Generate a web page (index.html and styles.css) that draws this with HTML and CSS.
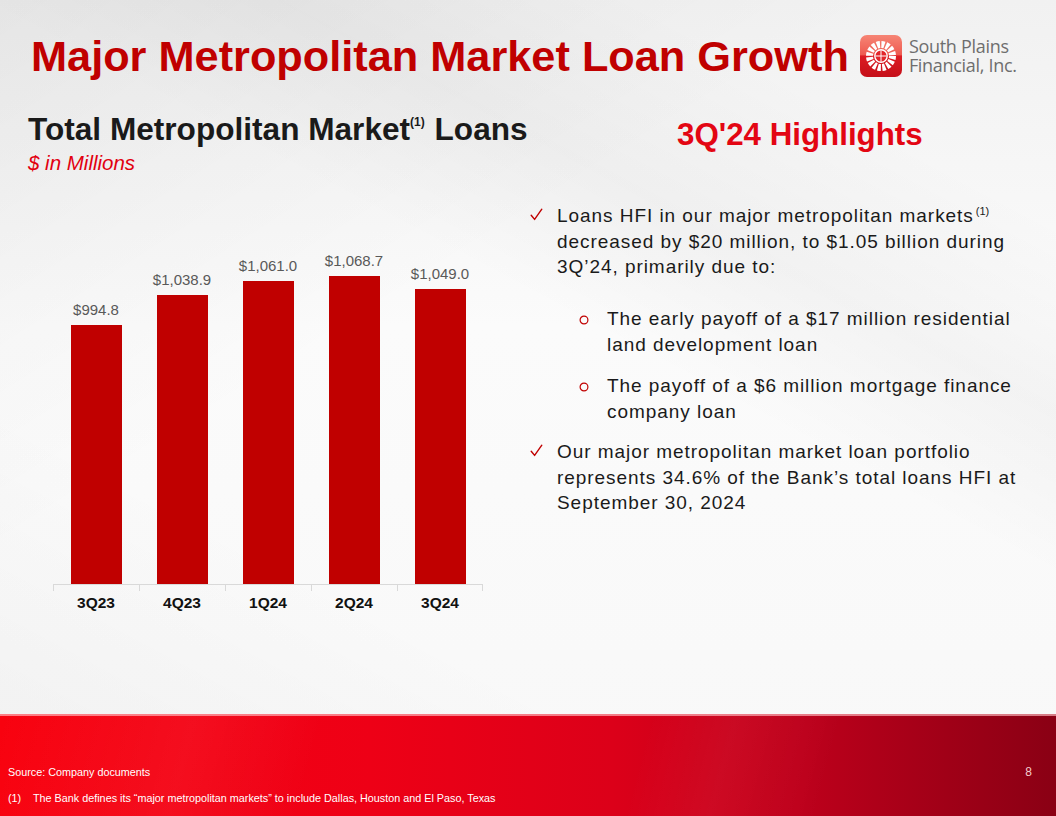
FILE: index.html
```html
<!DOCTYPE html>
<html lang="en">
<head>
<meta charset="utf-8">
<title>Major Metropolitan Market Loan Growth</title>
<link rel="stylesheet" href="styles.css">
</head>
<body>
<div class="slide">
  <header class="top">
    <h1 class="title">Major Metropolitan Market Loan Growth</h1>
    <div class="logo">
      <svg class="logo-mark" viewBox="0 0 42 42" width="42" height="42" aria-hidden="true">
        <defs>
          <linearGradient id="lg" x1="0" y1="0" x2="0" y2="1">
            <stop offset="0" stop-color="#f68575"/>
            <stop offset="0.47" stop-color="#ee5a50"/>
            <stop offset="0.5" stop-color="#dc1b22"/>
            <stop offset="1" stop-color="#c50f19"/>
          </linearGradient>
        </defs>
        <rect width="42" height="42" rx="7" fill="url(#lg)"/>
        <circle cx="21" cy="21" r="11.5" fill="none" stroke="#fff" stroke-width="7" stroke-dasharray="3.1 1.42"/>
        <circle cx="21" cy="21" r="6.2" fill="#e2262b" stroke="#fff" stroke-width="1.4"/>
        <path d="M21 15.3V26.7M15.3 21H26.7" stroke="#fff" stroke-width="1"/>
      </svg>
      <div class="logo-text"><span>South Plains</span><span>Financial, Inc.</span></div>
    </div>
  </header>

  <main class="content">
    <section class="chart-col">
      <h2 class="chart-title">Total Metropolitan Market<sup>(1)</sup> Loans</h2>
      <p class="units">$ in Millions</p>
      <div class="chart">
        <div class="plot">
          <div class="col"><span class="val">$994.8</span><div class="bar" style="height:259px"></div></div>
          <div class="col"><span class="val">$1,038.9</span><div class="bar" style="height:289px"></div></div>
          <div class="col"><span class="val">$1,061.0</span><div class="bar" style="height:303px"></div></div>
          <div class="col"><span class="val">$1,068.7</span><div class="bar" style="height:308px"></div></div>
          <div class="col"><span class="val">$1,049.0</span><div class="bar" style="height:295px"></div></div>
        </div>
        <div class="cats">
          <span class="cat">3Q23</span>
          <span class="cat">4Q23</span>
          <span class="cat">1Q24</span>
          <span class="cat">2Q24</span>
          <span class="cat">3Q24</span>
        </div>
      </div>
    </section>

    <section class="hl-col">
      <h2 class="hl-title">3Q'24 Highlights</h2>
      <ul class="bullets">
        <li class="item">
          <span class="mark"><svg class="check" viewBox="0 0 13 13" width="13" height="13" aria-hidden="true"><path d="M1.2 7.2 L4.6 11.4 L11.8 1.2" fill="none" stroke="#c00000" stroke-width="1.4" stroke-linecap="round" stroke-linejoin="round"/></svg></span>
          <div class="text">Loans HFI in our major metropolitan markets<sup class="fn">(1)</sup><br>decreased by $20 million, to $1.05 billion during<br>3Q’24, primarily due to:</div>
        </li>
        <li class="sub first">
          <span class="omark"><svg viewBox="0 0 10 10" width="10" height="10" aria-hidden="true"><circle cx="5" cy="5" r="3.9" fill="none" stroke="#c00000" stroke-width="1.2"/></svg></span>
          <div class="text">The early payoff of a $17 million residential<br>land development loan</div>
        </li>
        <li class="sub">
          <span class="omark"><svg viewBox="0 0 10 10" width="10" height="10" aria-hidden="true"><circle cx="5" cy="5" r="3.9" fill="none" stroke="#c00000" stroke-width="1.2"/></svg></span>
          <div class="text">The payoff of a $6 million mortgage finance<br>company loan</div>
        </li>
        <li class="item last">
          <span class="mark"><svg class="check" viewBox="0 0 13 13" width="13" height="13" aria-hidden="true"><path d="M1.2 7.2 L4.6 11.4 L11.8 1.2" fill="none" stroke="#c00000" stroke-width="1.4" stroke-linecap="round" stroke-linejoin="round"/></svg></span>
          <div class="text">Our major metropolitan market loan portfolio<br>represents 34.6% of the Bank’s total loans HFI at<br>September 30, 2024</div>
        </li>
      </ul>
    </section>
  </main>

  <footer class="foot">
    <div class="foot-row">
      <span class="source">Source: Company documents</span>
      <span class="page">8</span>
    </div>
    <div class="foot-note"><span class="fn-num">(1)</span><span>The Bank defines its “major metropolitan markets” to include Dallas, Houston and El Paso, Texas</span></div>
  </footer>
</div>
</body>
</html>
```

FILE: styles.css
```css
* { box-sizing: border-box; }

html, body {
  margin: 0;
  padding: 0;
  background: #ffffff;
}

body {
  font-family: "Liberation Sans", Arial, sans-serif;
  color: #1a1a1a;
}

.slide {
  width: 1056px;
  height: 816px;
  display: flex;
  flex-direction: column;
  overflow: hidden;
  background:
    linear-gradient(148deg, rgba(0,0,0,0.05) 0%, rgba(0,0,0,0.02) 22%, rgba(0,0,0,0) 38%),
    linear-gradient(28deg, rgba(0,0,0,0.035) 0%, rgba(0,0,0,0) 30%, rgba(0,0,0,0) 58%, rgba(0,0,0,0.03) 70%, rgba(0,0,0,0) 84%),
    linear-gradient(180deg, #f1f1f1 0%, #fbfbfb 40%, #f8f8f8 100%);
}

/* Header */
.top {
  display: flex;
  align-items: flex-start;
  padding: 31px 0 0 31px;
  height: 81px;
}

.title {
  margin: 0;
  flex: none;
  font-size: 43.3px;
  line-height: 50px;
  font-weight: 700;
  color: #c00000;
}

.logo {
  display: flex;
  align-items: flex-start;
  gap: 7px;
  margin: 4px 0 0 11px;
}

.logo-mark { display: block; flex: none; }

.logo-text {
  display: flex;
  flex-direction: column;
  font-family: "Open Sans", "Liberation Sans", sans-serif;
  font-size: 18px;
  line-height: 19px;
  letter-spacing: -0.3px;
  color: #6e6e6e;
  padding-top: 2px;
}

/* Main */
.content {
  display: grid;
  grid-template-columns: 530px 1fr;
  margin-top: 31px;
}

.chart-col {
  padding-left: 28px;
}

.chart-title {
  margin: 0;
  font-size: 31.6px;
  line-height: 34px;
  font-weight: 700;
  color: #1a1a1a;
  white-space: nowrap;
}

.chart-title sup {
  font-size: 12px;
  vertical-align: 14px;
  line-height: 0;
  margin: 0 1px 0 0;
}

.units {
  margin: 6px 0 0;
  font-size: 20.5px;
  line-height: 22px;
  font-style: italic;
  color: #e20010;
}

.chart {
  margin-left: 25px;
  width: 430px;
}

.plot {
  height: 410px;
  display: flex;
  align-items: flex-end;
}

.col {
  flex: 1;
  display: flex;
  flex-direction: column;
  align-items: center;
}

.val {
  font-size: 15px;
  line-height: 17px;
  color: #595959;
  margin-bottom: 7px;
  white-space: nowrap;
}

.bar {
  width: 51px;
  background: #c00000;
}

.cats {
  display: flex;
  border-top: 1px solid #d9d9d9;
}

.cat {
  flex: 1;
  position: relative;
  text-align: center;
  font-size: 15.5px;
  line-height: 18px;
  font-weight: 700;
  color: #111;
  padding-top: 9px;
}

.cat::before {
  content: "";
  position: absolute;
  left: 0;
  top: 0;
  width: 1px;
  height: 6px;
  background: #d9d9d9;
}

.cat:last-child::after {
  content: "";
  position: absolute;
  right: 0;
  top: 0;
  width: 1px;
  height: 6px;
  background: #d9d9d9;
}

/* Highlights */
.hl-title {
  margin: 5px 0 0;
  padding-left: 147px;
  font-size: 31.3px;
  line-height: 36px;
  font-weight: 700;
  color: #e30613;
  white-space: nowrap;
}

.bullets {
  list-style: none;
  margin: 50px 0 0;
  padding: 0;
  font-size: 19px;
  line-height: 25.5px;
  letter-spacing: 0.95px;
  color: #1a1a1a;
}

.bullets li {
  display: flex;
  align-items: flex-start;
  white-space: nowrap;
}

.mark {
  flex: none;
  width: 27px;
  height: 25.5px;
  display: flex;
  align-items: center;
}

.check { display: block; margin-top: -2px; }

.sub {
  padding-left: 49px;
  margin-top: 16px;
}

.sub.first { margin-top: 26.5px; }

.item.last { margin-top: 15px; }

.omark {
  flex: none;
  width: 28px;
  height: 25.5px;
  display: flex;
  align-items: center;
}

.omark svg { display: block; margin-top: 2px; }

.fn {
  font-size: 11px;
  letter-spacing: 0;
  vertical-align: 7px;
  line-height: 0;
  margin-left: 2px;
}

/* Footer */
.foot {
  margin-top: auto;
  height: 102px;
  padding: 50px 24px 0 8px;
  color: #ffffff;
  border-top: 2px solid rgba(255, 190, 195, 0.65);
  background:
    linear-gradient(105deg, rgba(255,255,255,0) 0%, rgba(255,255,255,0.05) 18%, rgba(255,255,255,0) 30%, rgba(255,255,255,0) 60%, rgba(255,255,255,0.04) 68%, rgba(255,255,255,0) 78%),
    linear-gradient(90deg, #f8020f 0%, #ee0016 35%, #dc0019 58%, #bd001b 76%, #8a0014 100%);
  font-size: 10.8px;
  line-height: 13px;
}

.foot-row {
  display: flex;
  justify-content: space-between;
  align-items: baseline;
}

.page {
  font-size: 12px;
  color: #f4cccc;
}

.foot-note {
  display: flex;
  margin-top: 13px;
}

.fn-num {
  width: 25px;
  flex: none;
}
```
